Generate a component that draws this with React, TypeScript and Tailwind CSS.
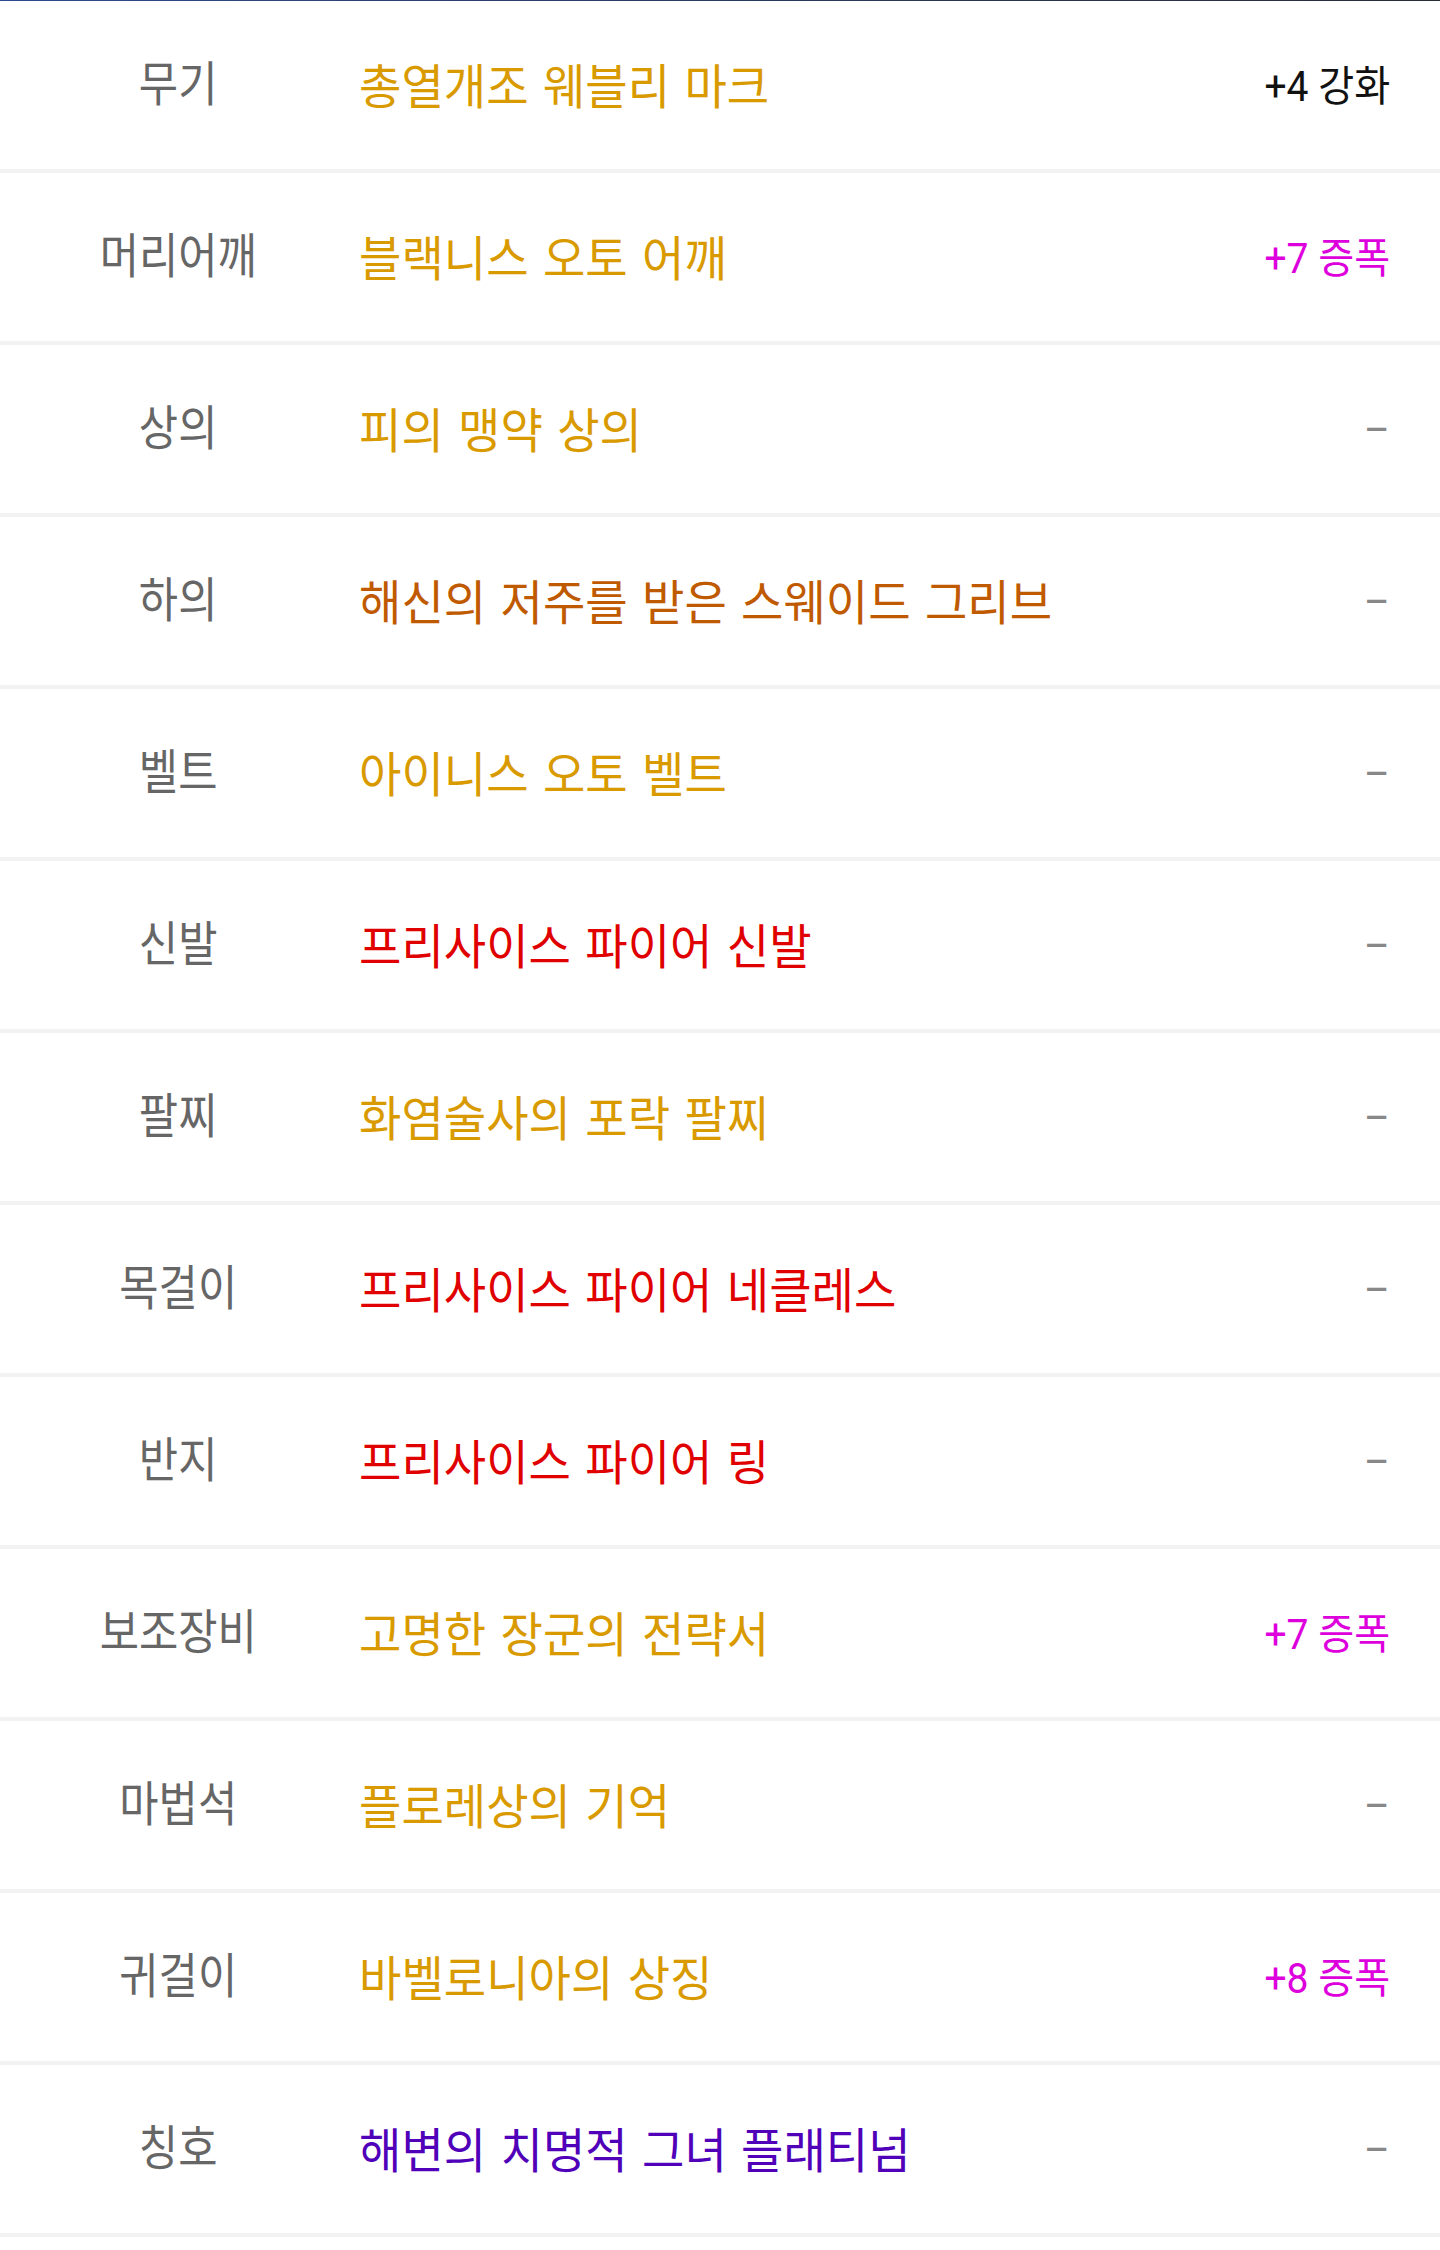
import React from 'react';

type Slot = {
    label: string;
    name: string;
    nameColor: string;
    extra?: string;
    extraColor?: string;
};

const SLOTS: Slot[] = [
    { label: '무기', name: '총열개조 웨블리 마크', nameColor: 'text-[#d99a00]', extra: '+4 강화', extraColor: 'text-[#111111]' },
    { label: '머리어깨', name: '블랙니스 오토 어깨', nameColor: 'text-[#d99a00]', extra: '+7 증폭', extraColor: 'text-[#dd00dd]' },
    { label: '상의', name: '피의 맹약 상의', nameColor: 'text-[#d99a00]' },
    { label: '하의', name: '해신의 저주를 받은 스웨이드 그리브', nameColor: 'text-[#bf5a00]' },
    { label: '벨트', name: '아이니스 오토 벨트', nameColor: 'text-[#d99a00]' },
    { label: '신발', name: '프리사이스 파이어 신발', nameColor: 'text-[#e00000]' },
    { label: '팔찌', name: '화염술사의 포락 팔찌', nameColor: 'text-[#d99a00]' },
    { label: '목걸이', name: '프리사이스 파이어 네클레스', nameColor: 'text-[#e00000]' },
    { label: '반지', name: '프리사이스 파이어 링', nameColor: 'text-[#e00000]' },
    { label: '보조장비', name: '고명한 장군의 전략서', nameColor: 'text-[#d99a00]', extra: '+7 증폭', extraColor: 'text-[#dd00dd]' },
    { label: '마법석', name: '플로레상의 기억', nameColor: 'text-[#d99a00]' },
    { label: '귀걸이', name: '바벨로니아의 상징', nameColor: 'text-[#d99a00]', extra: '+8 증폭', extraColor: 'text-[#dd00dd]' },
    { label: '칭호', name: '해변의 치명적 그녀 플래티넘', nameColor: 'text-[#5000b8]' },
];

function SlotRow({ slot }: { slot: Slot }) {
    return (
        <div className="flex h-[172px] items-center border-b-4 border-[#f2f2f2]">
            {/* 슬롯 이름 */}
            <div className="w-[356px] shrink-0 text-center">
                <span className="inline-block origin-center scale-x-[0.89] text-[#666666]">{slot.label}</span>
            </div>
            {/* 장비 이름 */}
            <div className="flex-1 whitespace-nowrap pl-[3px] pt-[5px]">
                <span className={`inline-block origin-left scale-x-[0.96] [word-spacing:3px] ${slot.nameColor}`}>{slot.name}</span>
            </div>
            {/* 강화 / 증폭 */}
            <div className="shrink-0 pr-[50px] pt-[3px] text-right text-[42px]">
                {slot.extra ? (
                    <span className={`inline-block origin-right scale-x-[0.93] ${slot.extraColor}`}>{slot.extra}</span>
                ) : (
                    <span className="inline-block origin-right scale-x-[0.93] text-[#888888]">–</span>
                )}
            </div>
        </div>
    );
}

export default function App() {
    return (
        <div className="min-h-[2250px] bg-white font-['Roboto','Noto_Sans_CJK_KR',sans-serif] text-[48px] leading-none">
            <div className="h-px bg-gradient-to-r from-[#2c4a8c] to-[#272b36]" />
            {SLOTS.map((s) => (
                <SlotRow key={s.label} slot={s} />
            ))}
        </div>
    );
}
